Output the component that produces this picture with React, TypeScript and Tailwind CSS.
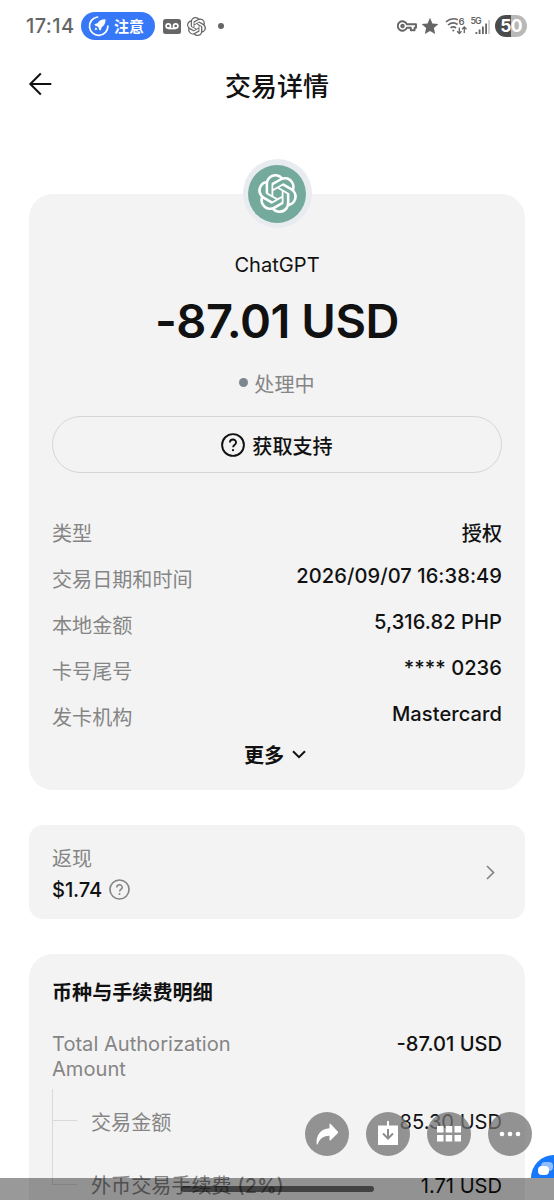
import type { ReactNode } from 'react';
import { SiOpenai } from 'react-icons/si';

function HelpIcon({ className }: { className: string }) {
  return (
    <svg viewBox="0 0 24 24" fill="none" stroke="currentColor" className={className}>
      <circle cx="12" cy="12" r="10.9" strokeWidth="1.9" />
      <path d="M8.900 9.600a3.100 3.100 0 0 1 6.200 0c0 2-3 2.400-3 4.600" strokeWidth="1.800" />
      <circle cx="12" cy="17.200" r="1.100" fill="currentColor" stroke="none" />
    </svg>
  );
}

function StatusBar() {
  return (
    <header className="flex h-[52px] items-center pl-[26px] pr-[27px] text-[#666666]">
      <span className="w-[49px] whitespace-nowrap text-[20px] font-medium leading-6 tracking-[0.4px]">17:14</span>
      <div className="ml-[6px] flex h-[28px] w-[74px] items-center rounded-full bg-[#3678f8] pl-[7px] text-white">
        <svg viewBox="0 0 22 22" className="h-[22px] w-[22px]" fill="none">
          <path d="M9.500 2a9.200 9.200 0 1 0 10.400 9" stroke="white" strokeWidth="1.700" strokeLinecap="round" />
          <path d="M17.500 4.200c-3.700-.2-6.300 1.300-8 4L6.300 9.200l1.400 1.800 1.500.2 1.500 1.500.2 1.700 1.700 1 1.100-3.200c2.700-1.700 4-4.500 3.800-8z" fill="white" />
          <path d="M7.600 12.200l2 2-2.900 1z" fill="white" />
        </svg>
        <span className="ml-[4px] pt-[2px] text-[15px] font-bold leading-5">注意</span>
      </div>
      <svg viewBox="0 0 18 15" className="ml-2 h-[15px] w-[18px]">
        <rect width="18" height="15" rx="2.500" fill="#666666" />
        <g fill="none" stroke="white" strokeWidth="1.700">
          <circle cx="5.300" cy="7" r="2.200" />
          <circle cx="12.700" cy="7" r="2.200" />
          <path d="M5.300 9.500h7.400" />
        </g>
      </svg>
      <SiOpenai className="ml-[6px] h-[19px] w-[19px]" />
      <span className="ml-[12px] h-[6px] w-[6px] rounded-full bg-[#666666]" />
      <div className="ml-auto flex items-center">
        <svg viewBox="0 0 20 12" className="h-[12px] w-[20px]" fill="none" stroke="#666666" strokeWidth="1.900">
          <path d="M9.800 4.200H19v3.600h-1.400v2.500h-3.800V7.800h-4A4.700 4.700 0 1 1 9.800 4.200z" strokeLinejoin="round" />
          <circle cx="5.500" cy="6" r="1.300" />
        </svg>
        <svg viewBox="0 0 18 18" className="ml-[4px] h-[18px] w-[18px]">
          <path d="M9 .8l2.400 5.600 6 .6-4.500 4.100 1.300 6L9 14l-5.200 3.100 1.300-6L.6 7l6-.6z" fill="#666666" />
        </svg>
        <svg viewBox="0 0 24 20" className="ml-[6px] h-[20px] w-[24px]" fill="none" stroke="#666666" strokeWidth="1.600">
          <path d="M1 5.800Q7 .9 12.800 3.800M3 9q5-4 9.500-.500M5.500 12q2.700-2.200 5.500 0" />
          <circle cx="8.300" cy="14.500" r="1" fill="#666666" stroke="none" />
          <path d="M14.300 11.500v6M12.100 15.300l2.200 2.200 2.200-2.200M19.300 17V11M17.100 13.200l2.200-2.200 2.200 2.200" strokeWidth="1.300" />
          <text x="13.500" y="8.800" fontSize="9.500" fontWeight="600" fill="#666666" stroke="none">6</text>
        </svg>
        <svg viewBox="0 0 20 20" className="ml-[2px] h-[20px] w-[20px]" fill="#666666">
          <text x="-.5" y="8" fontSize="8.800" fontWeight="600" textLength="11">5G</text>
          <rect x="4.500" y="16" width="1.800" height="2" />
          <rect x="7.700" y="13.500" width="1.800" height="4.500" />
          <rect x="11" y="10.500" width="1.800" height="7.500" />
          <rect x="14.200" y="7.500" width="1.800" height="10.500" />
          <rect x="17.200" y="4" width="1.600" height="14" fill="#c8c8c8" />
        </svg>
        <div className="ml-[4px] flex h-[22px] w-[32px] items-center justify-center rounded-full bg-linear-to-r from-[#4b4b4b] from-50% to-[#b8b8b8] to-50% text-[17.500px] font-bold leading-none tracking-[-0.8px] text-white">
          50
        </div>
      </div>
    </header>
  );
}

function DetailRow({ label, value, cjk = false }: { label: string; value: string; cjk?: boolean }) {
  return (
    <div className="flex h-[46px] items-center justify-between leading-6">
      <span className="pt-px text-[#858585]">{label}</span>
      <span className={cjk ? 'pt-px font-medium' : 'pb-[7px] font-medium tracking-[0.06px]'}>{value}</span>
    </div>
  );
}

function ToolButton({ children }: { children: ReactNode }) {
  return (
    <button className="flex h-[44px] w-[44px] items-center justify-center rounded-full bg-[#717171]/75">
      {children}
    </button>
  );
}

function FloatingTools() {
  return (
    <div className="absolute left-[305px] top-[1112px] flex gap-[17px]">
      <ToolButton>
        <svg viewBox="0 0 22 22" className="h-[22px] w-[22px]" fill="white">
          <path d="M13.500 1.500q0-1.500 1.200-.500l7 7.500q.7.900 0 1.700l-7 7q-1.200 1-1.200-.500v-3.900C7.500 12.800 4 15.500 1.800 21q-.7 1.200-1.100 0C-.3 12.500 4.500 5.800 13.500 5.200z" />
        </svg>
      </ToolButton>
      <ToolButton>
        <svg viewBox="0 0 22 26" className="mb-[3px] h-[26px] w-[22px]">
          <path d="M1 5.500h20V25H1z" fill="white" />
          <path d="M11 9V18M6 13.500l5 5 5-5" fill="none" stroke="#8d8d8d" strokeWidth="2" />
          <path d="M11 1v8" stroke="white" strokeWidth="2" />
        </svg>
      </ToolButton>
      <ToolButton>
        <svg viewBox="0 0 24 16" className="h-[16px] w-[24px]" fill="white">
          <path d="M0 0h6.500v6.500H0zM8.700 0h6.500v6.500H8.700zM17.500 0H24v6.500h-6.500zM0 9h6.500v6.500H0zM8.700 9h6.500v6.500H8.700zM17.500 9H24v6.500h-6.500z" />
        </svg>
      </ToolButton>
      <ToolButton>
        <svg viewBox="0 0 22 6" className="h-[6px] w-[22px]" fill="white">
          <circle cx="3" cy="3" r="2.300" />
          <circle cx="11" cy="3" r="2.300" />
          <circle cx="19" cy="3" r="2.300" />
        </svg>
      </ToolButton>
    </div>
  );
}

export default function App() {
  return (
    <div className="relative h-[1200px] w-[554px] overflow-hidden bg-white font-[Inter,'Noto_Sans_CJK_SC',sans-serif] text-[20.1px] text-[#111111]">
      <StatusBar />
      <div className="flex h-[66px] items-center px-[28px]">
        <svg viewBox="0 0 24 24" className="mb-[2px] h-[24px] w-[24px]" fill="none" stroke="#111111" strokeWidth="2">
          <path d="M12.800 1.500L2.300 12l10.500 10.500M2.300 12h21" />
        </svg>
        <h1 className="flex-1 pr-[24px] pt-[4px] text-center text-[26px] font-medium leading-8">交易详情</h1>
      </div>

      <section className="mx-[29px] mt-[76px] flex h-[596px] flex-col rounded-[24px] bg-[#f3f3f3] px-[23px]">
        <div className="-mt-[35px] flex h-[69px] w-[69px] shrink-0 items-center justify-center self-center rounded-full bg-[#e8ebf0]">
          <div className="flex h-[58px] w-[58px] items-center justify-center rounded-full bg-[#74aa9b]">
            <SiOpenai className="h-[39px] w-[39px] text-white" />
          </div>
        </div>
        <p className="mt-[25px] text-center leading-6">ChatGPT</p>
        <p className="mt-[16px] text-center text-[47px] font-semibold leading-[56px] tracking-[-0.45px]">-87.01 USD</p>
        <div className="mt-[21px] flex h-[26px] items-center justify-center gap-[6px] leading-6 text-[#858585]">
          <span className="mb-[2px] h-[9px] w-[9px] rounded-full bg-[#7d858f]" />
          <span className="pt-[3px]">处理中</span>
        </div>
        <button className="mt-[20px] flex h-[57px] shrink-0 items-center justify-center gap-[7px] rounded-full border border-[#d6d6d6] leading-6">
          <HelpIcon className="h-[24px] w-[24px]" />
          <span className="pt-[4px] font-medium">获取支持</span>
        </button>
        <div className="mt-[37px]">
          <DetailRow label="类型" value="授权" cjk />
          <DetailRow label="交易日期和时间" value="2026/09/07 16:38:49" />
          <DetailRow label="本地金额" value="5,316.82 PHP" />
          <DetailRow label="卡号尾号" value="**** 0236" />
          <DetailRow label="发卡机构" value="Mastercard" />
        </div>
        <div className="mt-[3px] flex items-center justify-center gap-[8px] pr-[4px] leading-6">
          <span className="pt-px font-bold">更多</span>
          <svg viewBox="0 0 14 9" className="mb-[3px] h-[9px] w-[14px]" fill="none" stroke="#111111" strokeWidth="2">
            <path d="M1 1.200l6 6 6-6" />
          </svg>
        </div>
      </section>

      <section className="mx-[29px] mt-[35px] flex h-[94px] items-center justify-between rounded-[14px] bg-[#f3f3f3] pl-[23px] pr-[30px]">
        <div className="pt-[3px]">
          <p className="leading-8 text-[#858585]">返现</p>
          <div className="flex h-[30px] items-center gap-[7px]">
            <span className="font-medium leading-6 tracking-[-0.1px]">$1.74</span>
            <HelpIcon className="h-[21px] w-[21px] text-[#858585]" />
          </div>
        </div>
        <svg viewBox="0 0 9 15" className="h-[15px] w-[9px]" fill="none" stroke="#858585" strokeWidth="1.700">
          <path d="M1 1l6.500 6.500L1 14" />
        </svg>
      </section>

      <section className="mx-[29px] mt-[35px] h-[300px] rounded-t-[24px] bg-[#f3f3f3] px-[23px] pt-[27px]">
        <h2 className="leading-6 font-bold">币种与手续费明细</h2>
        <div className="mt-[27px] flex justify-between">
          <span className="w-[200px] leading-[25px] text-[#858585]">Total Authorization Amount</span>
          <span className="font-medium leading-[25px]">-87.01 USD</span>
        </div>
        <div className="mt-[7px] flex">
          <div className="w-[25px]">
            <div className="h-[32px] border-b border-l border-[#d9d9d9]" />
            <div className="h-[64px] border-b border-l border-[#d9d9d9]" />
          </div>
          <div className="flex-1 pl-[14px] pt-[1px]">
            <div className="flex h-[64px] items-center justify-between leading-6">
              <span className="pt-px text-[#858585]">交易金额</span>
              <span>85.30 USD</span>
            </div>
            <div className="flex h-[64px] items-center justify-between leading-6">
              <span className="text-[#858585]">外币交易手续费 (2%)</span>
              <span>1.71 USD</span>
            </div>
          </div>
        </div>
      </section>

      <FloatingTools />
      <div className="absolute left-[531px] top-[1155px] h-[23px] w-[46px] rounded-t-[23px] bg-[#1677ff]">
        <svg viewBox="0 0 16 15" className="ml-[6px] mt-[7px] h-[15px] w-[16px]">
          <rect x="4" y="0" width="12" height="9" rx="4" fill="#8fbfff" />
          <rect x="1" y="4" width="11" height="9" rx="4" fill="white" />
        </svg>
      </div>
      <div className="absolute inset-x-0 bottom-0 flow-root h-[22px] bg-black/40">
        <div className="ml-[181px] mt-[8px] h-[6px] w-[193px] rounded-full bg-black/55" />
      </div>
    </div>
  );
}
